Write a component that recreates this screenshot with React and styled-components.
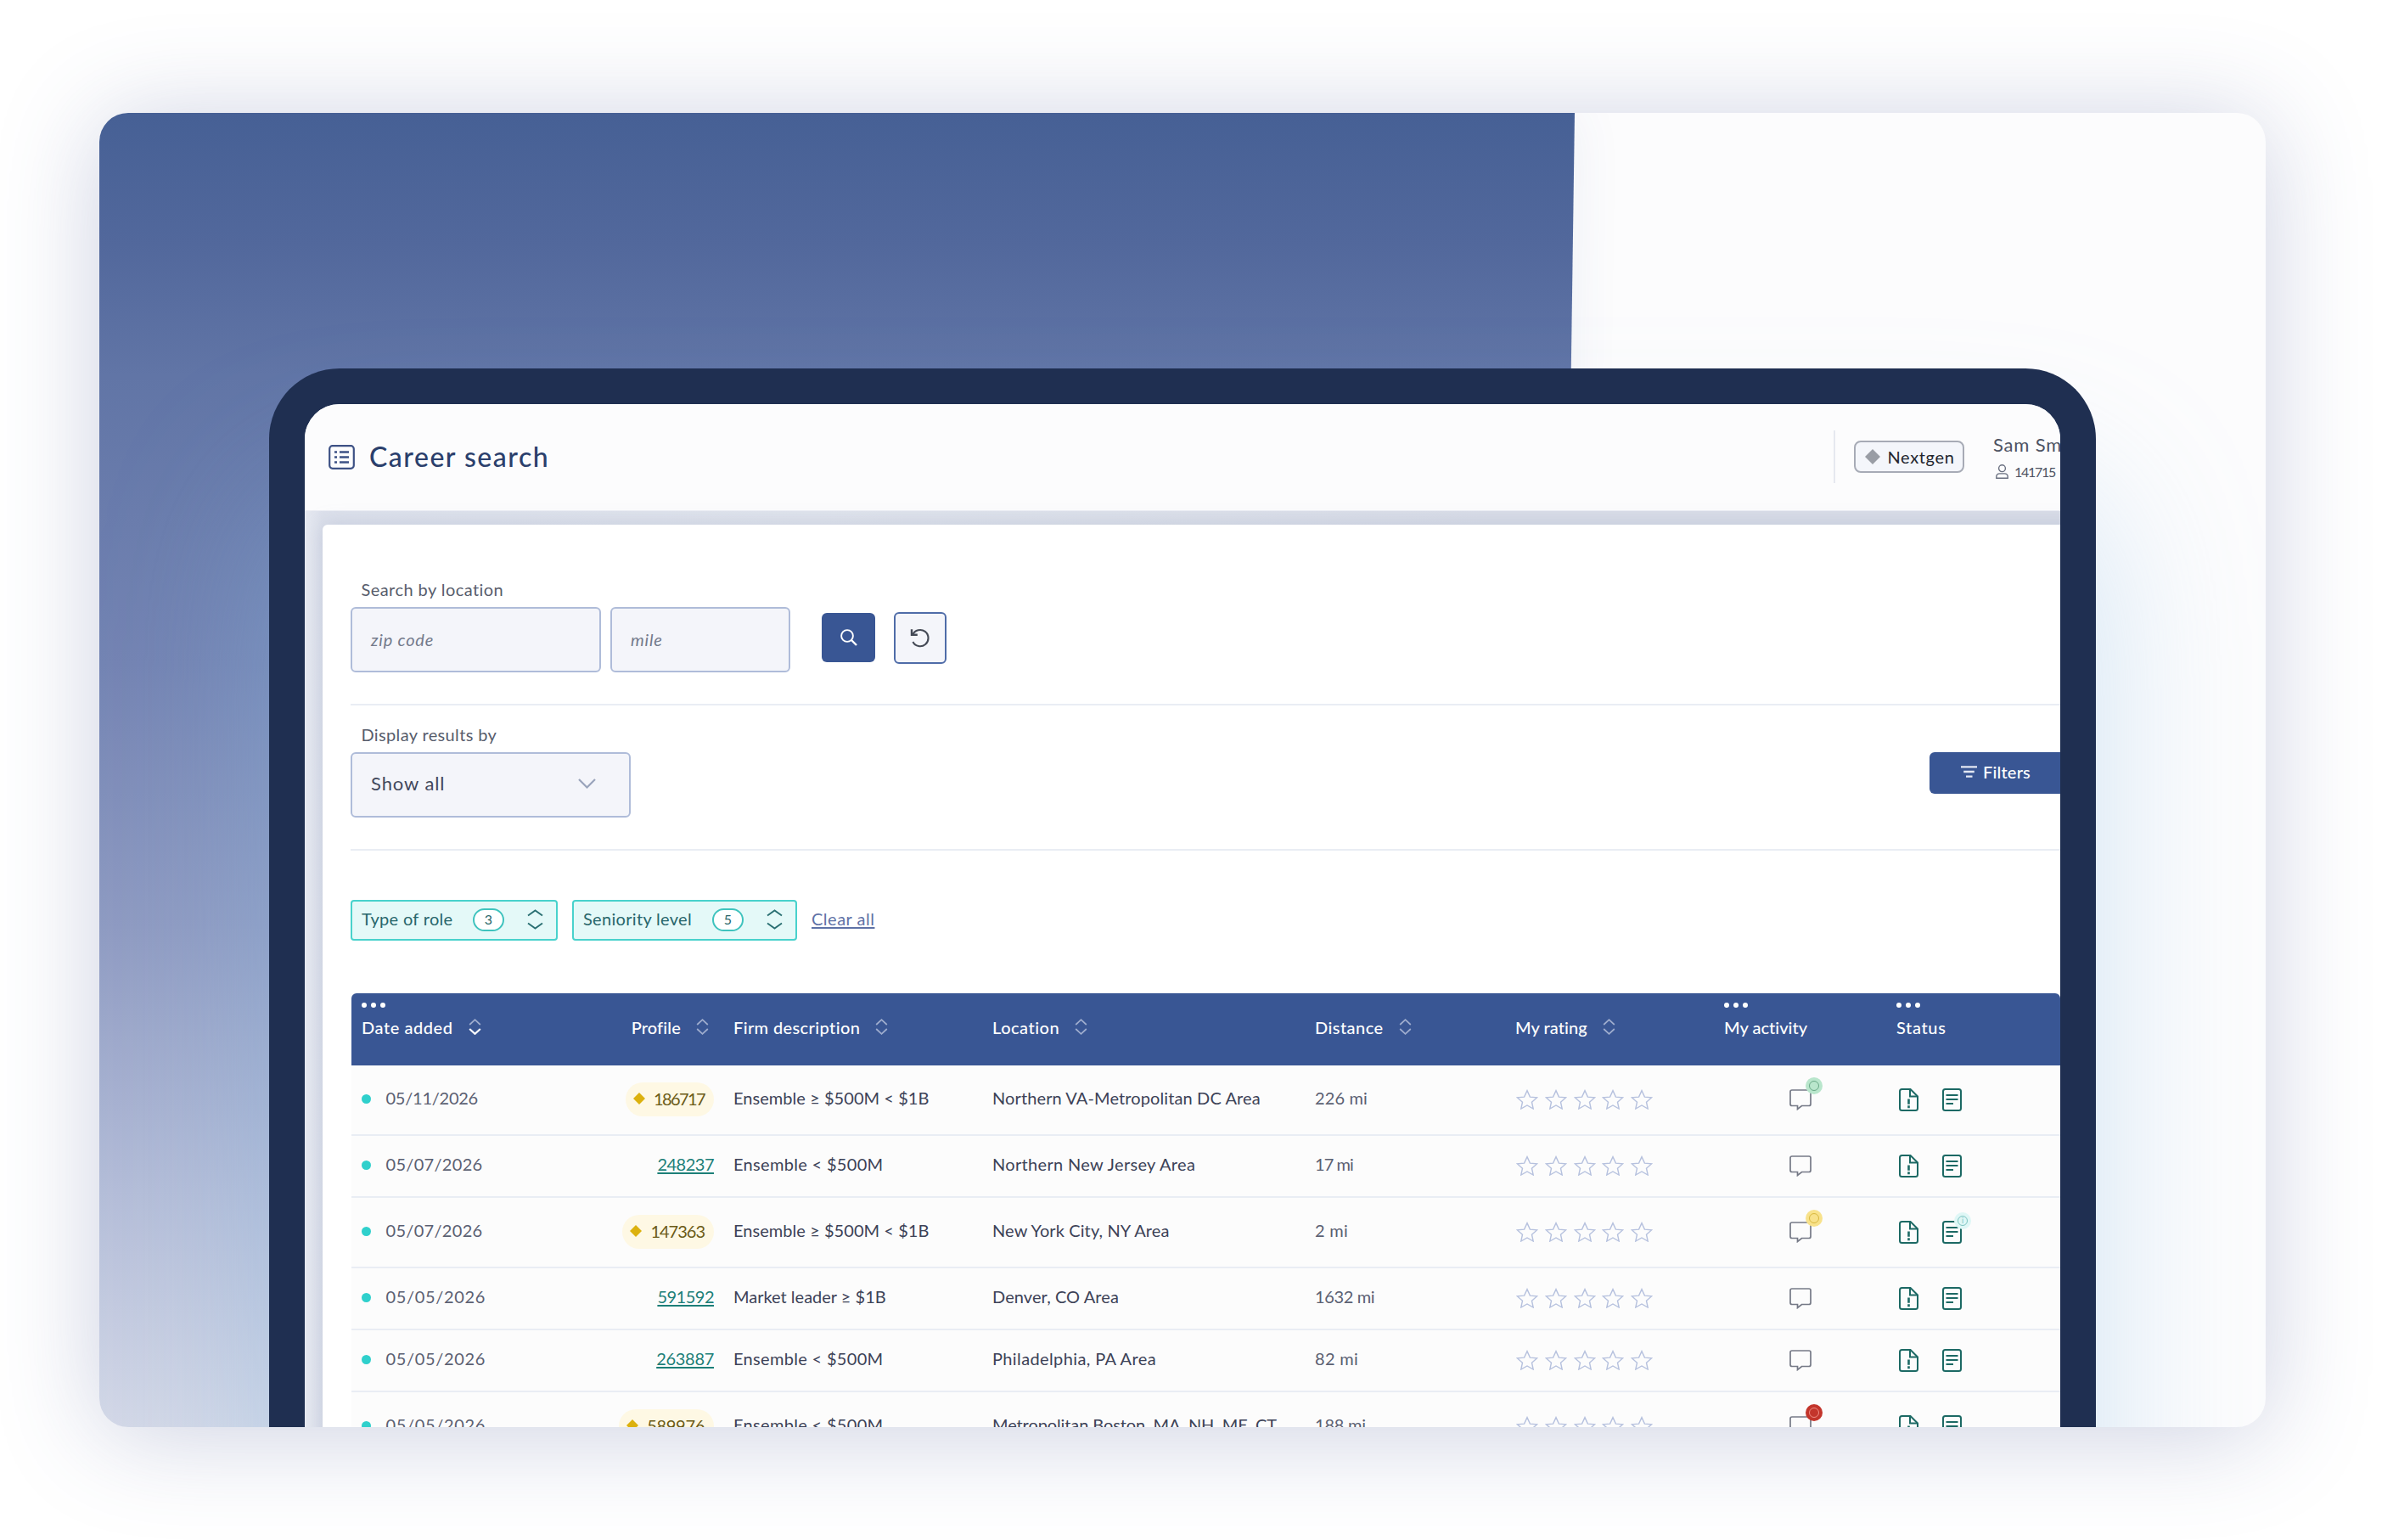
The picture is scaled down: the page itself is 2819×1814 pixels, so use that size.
import React from 'react';
import styled, { createGlobalStyle } from 'styled-components';

const GlobalStyle = createGlobalStyle`
    *, *::after {
        box-sizing: border-box;
    }

    body {
        margin: 0;
        background: #ffffff;
        font-family: Lato, "Open Sans", sans-serif;
        font-size: 20px;
        line-height: 24px;
    }
`;

const PageDiv = styled.div`
    width: 2819px;
    height: 1814px;
    padding: 133px 150px 0 117px;
    overflow: hidden;
`;

const CardDiv = styled.div`
    display: grid;
    width: 2552px;
    height: 1548px;
    border-radius: 34px;
    background: #fcfcfd;
    box-shadow: 0 8px 120px rgba(66, 82, 145, 0.27);
`;

const ClipDiv = styled.div`
    display: grid;
    grid-template-rows: 1548px;
    height: 1548px;
    border-radius: 34px;
    overflow: hidden;
`;

const BackdropDiv = styled.div`
    grid-area: 1 / 1;
    width: 1778px;
    height: 1548px;
    margin-left: -40px;
    transform: skewX(-0.8deg);
    transform-origin: top right;
    background: linear-gradient(180deg, #466095 0%, #52689c 10%, #6175a6 20%, #7484b3 42%, #8f9bc2 62%, #b4bdd8 82%, #d3d8e7 100%);
    box-shadow: 0 0 60px rgba(70, 90, 150, 0.08);
`;

const DeviceDiv = styled.div`
    grid-area: 1 / 1;
    z-index: 1;
    width: 2152px;
    height: 1600px;
    margin: 300.5px 0 0 199.5px;
    border: 42px solid #1f2f51;
    border-bottom: 0;
    border-radius: 83px 83px 0 0;
    background: #1f2f51;
    box-shadow: 0 150px 190px rgba(140, 190, 230, 0.38);
`;

const ScreenDiv = styled.div`
    display: flex;
    flex-direction: column;
    height: 1600px;
    border-radius: 41px 41px 0 0;
    overflow: hidden;
    background: linear-gradient(90deg, #e6e9f1 0px, #dce0eb 21px, #dfe3ec 600px, #d8dce7 1400px);
`;

const TopBarDiv = styled.div`
    display: flex;
    align-items: center;
    flex-shrink: 0;
    width: 2152px;
    height: 126px;
    padding-left: 28px;
    background: #fcfcfd;
    border-bottom: 1px solid #eceef4;
`;

const Text = styled.span`
    white-space: nowrap;
    letter-spacing: ${props => props.$track || 0}px;
`;

const TitleDiv = styled.div`
    margin-left: 17.5px;
    font-size: 32px;
    line-height: 38px;
    font-weight: 500;
    color: #2b3f6c;
    width: 1725px;
`;

const BarLineDiv = styled.div`
    width: 2px;
    height: 62px;
    background: #e6e8f0;
    margin-right: 22px;
`;

const BadgeDiv = styled.div`
    display: flex;
    align-items: center;
    gap: 9px;
    width: 130px;
    height: 38px;
    padding: 0 0 1px 10.5px;
    border: 2px solid #a7abb6;
    border-radius: 8px;
    background: #f4f6fb;
    color: #23262f;
`;

const UserDiv = styled.div`
    display: grid;
    gap: 9px;
    margin-left: 34px;
    color: #4d5262;
`;

const UserNameDiv = styled.div`
    font-size: 22px;
    line-height: 26px;
`;

const UserIdDiv = styled.div`
    display: flex;
    align-items: center;
    gap: 7px;
    padding-left: 3px;
    font-size: 16px;
    line-height: 20px;
`;

const PanelDiv = styled.div`
    flex-shrink: 0;
    width: 2120px;
    height: 1300px;
    margin: 16px 0 0 21px;
    padding-left: 33.5px;
    border-radius: 6px;
    background: #ffffff;
    box-shadow: 0 0 22px rgba(150, 160, 190, 0.35);
`;

const SectionDiv = styled.div`
    height: ${props => props.$height}px;
    padding-top: ${props => props.$top}px;
    border-bottom: 2px solid #e9edf4;
`;

const LabelDiv = styled.div`
    padding-left: 12.5px;
    margin-bottom: ${props => props.$gap}px;
    color: #585d6c;
`;

const FieldsDiv = styled.div`
    display: flex;
    align-items: center;
`;

const FieldDiv = styled.div`
    display: flex;
    align-items: center;
    width: ${props => props.$width}px;
    height: 77px;
    margin-right: 11px;
    padding: 0 39px 2px 22px;
    border: 2px solid #afbcd9;
    border-radius: 6px;
    background: #f4f5fa;
    font-style: italic;
    color: #737a8b;
`;

const SelectDiv = styled(FieldDiv)`
    justify-content: space-between;
    font-style: normal;
    font-size: 22px;
    color: #42485c;
`;

const SearchButton = styled.button`
    display: flex;
    align-items: center;
    justify-content: center;
    width: 63px;
    height: 58px;
    margin: 0 22px 5px 26px;
    padding: 0;
    border: 0;
    border-radius: 6px;
    background: #395694;
`;

const ResetButton = styled(SearchButton)`
    width: 62px;
    height: 61px;
    margin: 0 0 5px 0;
    border: 2px solid #4f6ca8;
    background: #f4f5fa;
`;

const SelectRowDiv = styled.div`
    display: flex;
    justify-content: space-between;
    align-items: flex-start;
    width: 2030px;
`;

const FilterButton = styled.button`
    display: flex;
    align-items: center;
    gap: 7px;
    width: 170px;
    height: 49px;
    padding: 0 0 2px 37px;
    border: 0;
    border-radius: 6px;
    background: #395694;
    color: #ffffff;
    font: 500 20px Lato, sans-serif;
`;

const ChipsDiv = styled.div`
    display: flex;
    align-items: center;
    gap: 17px;
    margin-top: 58px;
`;

const ChipDiv = styled.div`
    display: flex;
    align-items: center;
    width: ${props => props.$width}px;
    height: 48px;
    padding: 0 15px 1px 11px;
    border: 2px solid #48d2cc;
    border-radius: 4px;
    background: #e4f9f8;
    color: #28666b;
`;

const ChipLabelDiv = styled.div`
    padding-bottom: 2px;
`;

const CountDiv = styled.div`
    width: 37px;
    height: 27px;
    margin: 0 27px 0 auto;
    border: 2px solid #3fc3be;
    border-radius: 14px;
    background: #ffffff;
    font-size: 16px;
    line-height: 22px;
    text-align: center;
`;

const ClearLink = styled.a`
    padding-bottom: 3px;
    color: #5f72a6;
    text-decoration: underline;
    text-underline-offset: 2px;
    white-space: nowrap;
    letter-spacing: 0.5px;
`;

const TableDiv = styled.div`
    width: 2013px;
    margin: 62px 0 0 1px;
`;

const RowDiv = styled.div`
    display: grid;
    grid-template-columns: 286px 129px 328px 380px 236px 246px 203px 1fr;
    align-items: center;
    height: ${props => props.$tall ? 83 : 73}px;
    padding-left: 12px;
    border-bottom: 2px solid #e9edf4;
    background: #fcfcfc;
`;

const HeadRowDiv = styled(RowDiv)`
    align-items: start;
    height: 85px;
    padding-top: 11px;
    border: 0;
    border-radius: 6px 6px 0 0;
    background: #395694;
    color: #ffffff;
    font-weight: 500;
`;

const HeadDiv = styled.div`
    display: grid;
    gap: 11px;
    justify-content: ${props => props.$end ? 'end' : 'start'};
    padding-left: ${props => props.$pad || 0}px;
    padding-right: ${props => props.$end ? 6 : 0}px;
`;

const HeadLabelDiv = styled.div`
    display: flex;
    align-items: center;
    gap: 18px;
`;

const DotsDiv = styled.div`
    display: flex;
    gap: 5px;
    height: 6px;

    i {
        width: 6px;
        height: 6px;
        border-radius: 50%;
        background: #ffffff;
    }
`;

const CellDiv = styled.div`
    display: flex;
    align-items: center;
    justify-content: ${props => props.$end ? 'flex-end' : 'flex-start'};
    padding-left: ${props => props.$pad || 0}px;
    padding-bottom: ${props => props.$lift || 0}px;
    gap: ${props => props.$gap || 0}px;
    color: ${props => props.$color || '#3c4257'};
`;

const NewDotDiv = styled.div`
    width: 11px;
    height: 11px;
    margin-top: 3px;
    border-radius: 50%;
    background: #2fd0cc;
`;

const PillDiv = styled.div`
    display: flex;
    align-items: center;
    gap: 10px;
    height: 40px;
    padding: 0 11px 2px 9px;
    border-radius: 20px;
    background: #fef8e4;
    color: #6b5b17;
`;

const ProfileLink = styled.a`
    color: #1c7f78;
    text-decoration: underline;
    text-underline-offset: 2px;
    letter-spacing: ${props => props.$track}px;
`;

const IconDiv = styled.div`
    position: relative;
    display: flex;
`;

const MarkDiv = styled.div`
    position: absolute;
    top: ${props => props.$top}px;
    left: ${props => props.$left}px;
    display: flex;
    align-items: center;
    justify-content: center;
    width: 20px;
    height: 20px;
    border-radius: 50%;
    background: ${props => props.$bg};

    &::after {
        content: '${props => props.$sign || ''}';
        width: 12px;
        height: 12px;
        border: 1.5px solid ${props => props.$ring};
        border-radius: 50%;
        color: ${props => props.$ring};
        font-size: 9px;
        line-height: 9px;
        text-align: center;
    }
`;

const marks = {
    green: { bg: '#b9e6cc', ring: '#69a987' },
    yellow: { bg: '#f8e28b', ring: '#d9b83f' },
    red: { bg: '#c3352b', ring: '#ee8d84' },
};

const columns = [
    { name: 'Date added', track: 0.56, dots: true, sort: 'down' },
    { name: 'Profile', track: 0.15, sort: 'none', end: true },
    { name: 'Firm description', track: 0.38, sort: 'none', pad: 23 },
    { name: 'Location', track: 0.5, sort: 'none' },
    { name: 'Distance', track: 0.44, sort: 'none' },
    { name: 'My rating', track: 0.06, sort: 'none' },
    { name: 'My activity', track: 0.02, dots: true },
    { name: 'Status', track: 0.64, dots: true },
];

// every text comes with its tracking
const rows = [
    { date: ['05/11/2026', -0.24], profile: ['186717', -1.6], gold: true, firm: ['Ensemble ≥ $500M < $1B', 0.05], location: ['Northern VA-Metropolitan DC Area', 0.11], distance: ['226 mi', 0.14], mark: 'green' },
    { date: ['05/07/2026', 0.31], profile: ['248237', -0.5], firm: ['Ensemble < $500M', 0.32], location: ['Northern New Jersey Area', 0.33], distance: ['17 mi', -0.92] },
    { date: ['05/07/2026', 0.31], profile: ['147363', -1.0], gold: true, firm: ['Ensemble ≥ $500M < $1B', 0.05], location: ['New York City, NY Area', 0.11], distance: ['2 mi', 0.25], mark: 'yellow', info: true },
    { date: ['05/05/2026', 0.65], profile: ['591592', -0.5], firm: ['Market leader ≥ $1B', 0], location: ['Denver, CO Area', 0.08], distance: ['1632 mi', -0.35] },
    { date: ['05/05/2026', 0.65], profile: ['263887', -0.3], firm: ['Ensemble < $500M', 0.32], location: ['Philadelphia, PA Area', 0.38], distance: ['82 mi', 0.28] },
    { date: ['05/05/2026', 0.65], profile: ['589976', -0.3], gold: true, firm: ['Ensemble < $500M', 0.32], location: ['Metropolitan Boston, MA, NH, ME, CT', -0.1], distance: ['188 mi', -0.2], mark: 'red' },
];

function ListIcon(){
    return (
        <svg width="31" height="29" viewBox="0 0 31 29" fill="none" stroke="#3d5185" strokeWidth="2.2">
            <rect x="1.2" y="1.2" width="28.6" height="26.6" rx="3.5" />
            <path d="M7 8.5h3M7 14.5h3M7 20.5h3M13 8.5h11M13 14.5h11M13 20.5h11" strokeWidth="2.6" />
        </svg>
    )
}

function Diamond({ width, height, color }){
    return (
        <svg width={width} height={height} viewBox="0 0 10 10" preserveAspectRatio="none" fill={color}>
            <path d="M5 0L10 5L5 10L0 5Z" />
        </svg>
    )
}

function UserIcon(){
    return (
        <svg width="15" height="17" viewBox="0 0 15 17" fill="none" stroke="#6a7080" strokeWidth="1.4">
            <circle cx="7.5" cy="4.7" r="3.9" />
            <path d="M0.8 16.2v-1.4c0-2.4 1.6-3.9 3.9-3.9h5.6c2.3 0 3.9 1.5 3.9 3.9v1.4z" />
        </svg>
    )
}

function SearchIcon(){
    return (
        <svg width="20" height="20" viewBox="0 0 20 20" fill="none" stroke="#ffffff" strokeWidth="1.9">
            <circle cx="8" cy="8" r="6.9" />
            <path d="M13 13l6 6" strokeWidth="2.4" />
        </svg>
    )
}

function ResetIcon(){
    return (
        <svg width="24" height="23" viewBox="0 0 24 23" fill="none" stroke="#454a56" strokeWidth="2.1">
            <path d="M3.2 7.6A9.6 9.6 0 1 1 3.4 16" />
            <path d="M2 1.2v6.6h6.8" strokeWidth="2.4" />
        </svg>
    )
}

function ChevronIcon(){
    return (
        <svg width="21" height="12" viewBox="0 0 21 12" fill="none" stroke="#9aa4bb" strokeWidth="2.2">
            <path d="M1 1l9.5 9.5L20 1" />
        </svg>
    )
}

function FilterIcon(){
    return (
        <svg width="19" height="14" viewBox="0 0 19 14" stroke="#e3e8f3" strokeWidth="2.3">
            <path d="M0 1.4h19M3.2 7h12.6M6 12.6h7.5" />
        </svg>
    )
}

function ChipArrows(){
    return (
        <svg width="19" height="24" viewBox="0 0 19 24" fill="none" stroke="#2b7073" strokeWidth="1.9">
            <path d="M1 7.5L9.5 1.5L18 7.5M1 16.5L9.5 22.5L18 16.5" />
        </svg>
    )
}

function SortIcon({ active }){
    return (
        <svg width="15" height="19" viewBox="0 0 15 19" fill="none" stroke="#9fadce" strokeWidth="1.7">
            <path d="M1.2 7L7.5 1.2L13.8 7" />
            <path d="M1.2 12L7.5 17.8L13.8 12" stroke={active ? '#ffffff' : '#9fadce'} strokeWidth={active ? 2.2 : 1.7} />
        </svg>
    )
}

function StarIcon(){
    return (
        <svg width="26" height="24" viewBox="0 0 26 24" fill="none" stroke="#b6c1de" strokeWidth="1.4">
            <path d="M13 1.6L16.4 9.1L24.5 9.9L18.5 15.2L20.2 23L13 19L5.8 23L7.5 15.2L1.5 9.9L9.6 9.1Z" />
        </svg>
    )
}

function CommentIcon(){
    return (
        <svg width="26" height="25" viewBox="0 0 26 25" fill="none" stroke="#757986" strokeWidth="1.7">
            <path d="M3 1h20q2 0 2 2v14.5q0 2-2 2H14.5l-5 4v-4H3q-2 0-2-2V3q0-2 2-2z" />
        </svg>
    )
}

function AlertFileIcon(){
    return (
        <svg width="23" height="27" viewBox="0 0 23 27" fill="none" stroke="#1c6964" strokeWidth="2">
            <path d="M3.5 1H13.5L22 9.5V23.5q0 2.5-2.5 2.5h-16Q1 26 1 23.5V3.5Q1 1 3.5 1z" />
            <path d="M13 1v8.5h9" />
            <path d="M11.5 12.5v6.3M11.5 20.3v3" strokeWidth="2.6" />
        </svg>
    )
}

function NoteIcon(){
    return (
        <svg width="23" height="27" viewBox="0 0 23 27" fill="none" stroke="#1c6964" strokeWidth="2">
            <rect x="1" y="1" width="21" height="25" rx="2.5" />
            <path d="M4.5 8H18.5M4.5 13H18.5M4.5 18H13" />
        </svg>
    )
}

function Head({ column }){
    return (
        <HeadDiv $pad={column.pad} $end={column.end}>
            <DotsDiv>{column.dots && <><i /><i /><i /></>}</DotsDiv>
            <HeadLabelDiv>
                <Text $track={column.track}>{column.name}</Text>
                {column.sort && <SortIcon active={column.sort == 'down'} />}
            </HeadLabelDiv>
        </HeadDiv>
    )
}

function Row({ row }){
    var mark = marks[row.mark];

    return (
        <RowDiv $tall={row.gold}>
            <CellDiv $gap={17.5} $lift={4} $color="#5b6072">
                <NewDotDiv />
                <Text $track={row.date[1]}>{row.date[0]}</Text>
            </CellDiv>
            <CellDiv $end $lift={row.gold ? 0 : 4}>
                {row.gold
                    ? <PillDiv><Diamond width="14" height="14" color="#dcb10e" /><Text $track={row.profile[1]}>{row.profile[0]}</Text></PillDiv>
                    : <ProfileLink $track={row.profile[1]}>{row.profile[0]}</ProfileLink>}
            </CellDiv>
            <CellDiv $pad={23} $lift={4}><Text $track={row.firm[1]}>{row.firm[0]}</Text></CellDiv>
            <CellDiv $lift={4}><Text $track={row.location[1]}>{row.location[0]}</Text></CellDiv>
            <CellDiv $lift={4} $color="#5b6072"><Text $track={row.distance[1]}>{row.distance[0]}</Text></CellDiv>
            <CellDiv $pad={1} $gap={7.8}>
                {[1, 2, 3, 4, 5].map(n => <StarIcon key={n} />)}
            </CellDiv>
            <CellDiv $pad={76.5}>
                <IconDiv>
                    <CommentIcon />
                    {mark && <MarkDiv $top={-14} $left={19} $bg={mark.bg} $ring={mark.ring} />}
                </IconDiv>
            </CellDiv>
            <CellDiv $pad={3} $gap={27.5}>
                <AlertFileIcon />
                <IconDiv>
                    <NoteIcon />
                    {row.info && <MarkDiv $top={-10} $left={14.5} $bg="#dff7f6" $ring="#7cc4c1" $sign="i" />}
                </IconDiv>
            </CellDiv>
        </RowDiv>
    )
}

export default function App(){
    return (
        <PageDiv>
            <GlobalStyle />
            <CardDiv>
                <ClipDiv>
                    <BackdropDiv />
                    <DeviceDiv>
                        <ScreenDiv>
                            <TopBarDiv>
                                <ListIcon />
                                <TitleDiv><Text $track={1.5}>Career search</Text></TitleDiv>
                                <BarLineDiv />
                                <BadgeDiv>
                                    <Diamond width="18" height="18" color="#999da5" />
                                    <Text $track={0.65}>Nextgen</Text>
                                </BadgeDiv>
                                <UserDiv>
                                    <UserNameDiv><Text $track={0.8}>Sam Smith</Text></UserNameDiv>
                                    <UserIdDiv><UserIcon /><Text $track={-1.3}>141715</Text></UserIdDiv>
                                </UserDiv>
                            </TopBarDiv>

                            <PanelDiv>
                                <SectionDiv $height={213} $top={64.5}>
                                    <LabelDiv $gap={9}><Text $track={0.44}>Search by location</Text></LabelDiv>
                                    <FieldsDiv>
                                        <FieldDiv $width={295}><Text $track={0.78}>zip code</Text></FieldDiv>
                                        <FieldDiv $width={212}><Text $track={0.77}>mile</Text></FieldDiv>
                                        <SearchButton><SearchIcon /></SearchButton>
                                        <ResetButton><ResetIcon /></ResetButton>
                                    </FieldsDiv>
                                </SectionDiv>

                                <SectionDiv $height={171} $top={22}>
                                    <LabelDiv $gap={9}><Text $track={0.36}>Display results by</Text></LabelDiv>
                                    <SelectRowDiv>
                                        <SelectDiv $width={330}><Text $track={0.92}>Show all</Text><ChevronIcon /></SelectDiv>
                                        <FilterButton><FilterIcon /><Text $track={0.19}>Filters</Text></FilterButton>
                                    </SelectRowDiv>
                                </SectionDiv>

                                <ChipsDiv>
                                    <ChipDiv $width={244}>
                                        <ChipLabelDiv><Text $track={0.32}>Type of role</Text></ChipLabelDiv>
                                        <CountDiv>3</CountDiv>
                                        <ChipArrows />
                                    </ChipDiv>
                                    <ChipDiv $width={265}>
                                        <ChipLabelDiv><Text $track={0.32}>Seniority level</Text></ChipLabelDiv>
                                        <CountDiv>5</CountDiv>
                                        <ChipArrows />
                                    </ChipDiv>
                                    <ClearLink>Clear all</ClearLink>
                                </ChipsDiv>

                                <TableDiv>
                                    <HeadRowDiv>
                                        {columns.map(c => <Head key={c.name} column={c} />)}
                                    </HeadRowDiv>
                                    {rows.map((r, i) => <Row key={i} row={r} />)}
                                </TableDiv>
                            </PanelDiv>
                        </ScreenDiv>
                    </DeviceDiv>
                </ClipDiv>
            </CardDiv>
        </PageDiv>
    )
}
